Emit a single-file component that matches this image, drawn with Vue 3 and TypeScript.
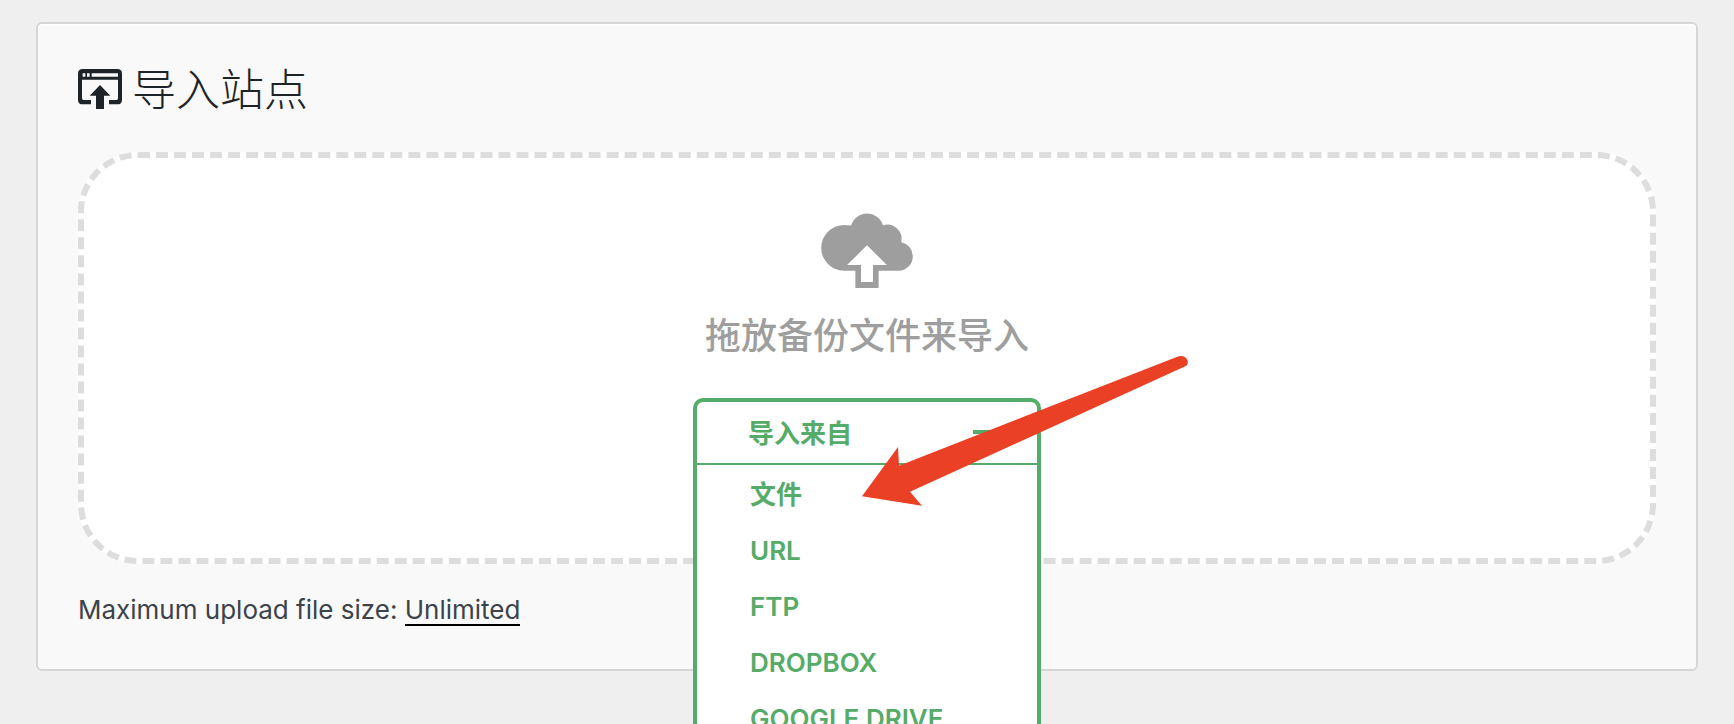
<script setup lang="ts">
import { ref } from 'vue'

interface Source {
  id: string
  label: string
}

const open = ref<boolean>(true)
const sources: Source[] = [
  { id: 'file', label: '文件' },
  { id: 'url', label: 'URL' },
  { id: 'ftp', label: 'FTP' },
  { id: 'dropbox', label: 'DROPBOX' },
  { id: 'gdrive', label: 'GOOGLE DRIVE' },
]
</script>

<template>
  <main class="page">
    <section class="card">
      <h1 class="title">
        <svg class="title-icon" viewBox="0 0 132 120" aria-hidden="true">
          <path
            fill="currentColor"
            fill-rule="evenodd"
            d="M14 0H118Q132 0 132 14V92Q132 106 118 106H93V93H115Q120 93 120 88V32H12V88Q12 93 17 93H39V106H14Q0 106 0 92V14Q0 0 14 0ZM41 13V23H120V13Z"
          />
          <path fill="#f9f9f9" d="M14 13h8v10h-8zM27 13h8v10h-8z" />
          <path fill="currentColor" d="M66 48L97 80H78V120H54V80H35Z" />
        </svg>
        <span class="title-text">导入站点</span>
      </h1>

      <div class="dropzone">
        <svg class="cloud" viewBox="0 0 276 226" aria-hidden="true">
          <path
            fill="currentColor"
            d="M69 174A69 69 0 0 1 0 105A69 69 0 0 1 69 36Q80 36 90 38A50 50 0 0 1 186 37A43 43 0 0 1 241 88A43 43 0 0 1 276 131A43 43 0 0 1 233 174H173V226H103V174Z"
          />
          <path fill="#fff" d="M138 97L198 157H156V208H120V157H78Z" />
        </svg>
        <p class="hint">拖放备份文件来导入</p>
        <div class="dropdown">
          <button class="toggle" type="button" :aria-expanded="open" @click="open = !open">
            <span>导入来自</span>
            <span class="minus"></span>
          </button>
          <ul v-if="open" class="menu">
            <li v-for="s in sources" :key="s.id">
              <a class="item" :href="'#' + s.id">{{ s.label }}</a>
            </li>
          </ul>
          <svg class="pointer" viewBox="66 49 978 450" aria-hidden="true">
            <path
              fill="#ea4025"
              d="M66 470L174 322L177 378L1012 51Q1035 44 1043 63Q1046 74 1036 80L210 456L246 498Z"
            />
          </svg>
        </div>
      </div>

      <p class="limit">Maximum upload file size: <span class="value">Unlimited</span></p>
    </section>
  </main>
</template>

<style>
body {
  margin: 0;
  background: #efefef;
}
</style>

<style scoped>
.page {
  box-sizing: border-box;
  height: 100vh;
  padding: 22px 36px;
  overflow: hidden;
  background: #efefef;
  font-family: Inter, 'Noto Sans CJK SC', sans-serif;
}
.card {
  padding: 36px 40px 40px;
  border: 2px solid #d6d6d6;
  border-radius: 6px;
  background: #f9f9f9;
  box-shadow: inset 0 2px 0 #fff;
}
.title {
  display: flex;
  align-items: center;
  gap: 10px;
  margin: 0 0 34px;
  color: #1d2327;
  font-family: 'Noto Sans CJK SC', sans-serif;
  font-size: 44px;
  font-weight: 300;
  line-height: 54px;
}
.title-text {
  padding-bottom: 4px;
}
.title-icon {
  width: 44px;
  height: 40px;
}
.dropzone {
  box-sizing: border-box;
  display: flex;
  flex-direction: column;
  align-items: center;
  min-height: 412px;
  padding-top: 55px;
  border: 6px dashed #ddd;
  border-radius: 60px;
  background: #fff;
}
.cloud {
  width: 92px;
  height: 75px;
  color: #9e9e9e;
}
.hint {
  margin: 21px 0 35px;
  color: #9e9e9e;
  font-size: 36px;
  font-weight: 500;
  line-height: 54px;
}
.dropdown {
  position: relative;
  width: 348px;
  color: #55ab68;
  font-size: 26px;
  font-weight: 600;
}
.toggle {
  box-sizing: border-box;
  display: flex;
  align-items: center;
  justify-content: space-between;
  width: 100%;
  height: 67px;
  padding: 0 44px 2px 51px;
  border: 4px solid #55ab68;
  border-bottom-width: 2px;
  border-radius: 10px 10px 0 0;
  background: #fff;
  color: inherit;
  font: inherit;
  cursor: pointer;
}
.minus {
  width: 20px;
  height: 4px;
  background: #55ab68;
}
.menu {
  position: absolute;
  top: 100%;
  left: 0;
  right: 0;
  margin: 0;
  padding: 2px 0 16px;
  border: solid #55ab68;
  border-width: 0 4px 4px;
  border-radius: 0 0 10px 10px;
  background: #fff;
  list-style: none;
}
.item {
  display: block;
  padding: 0 53px;
  color: inherit;
  line-height: 56px;
  text-decoration: none;
}
.pointer {
  position: absolute;
  top: -42px;
  left: 169px;
  width: 326px;
  height: 150px;
  pointer-events: none;
}
.limit {
  margin: 26px 0 0;
  color: #3c434a;
  font-size: 26px;
  line-height: 39px;
}
.value {
  display: inline-block;
  border-bottom: 2px solid #000;
  line-height: 28px;
}
</style>
